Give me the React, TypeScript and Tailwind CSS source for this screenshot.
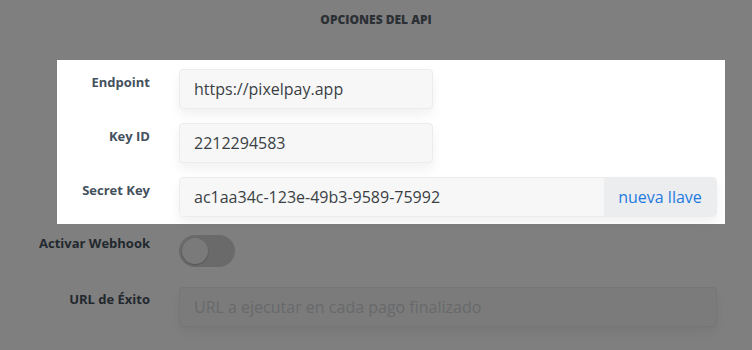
import React from "react";

const inputClass =
  "h-[40px] rounded-[4px] border border-[#ececec] bg-[#f7f7f7] pl-[14px] text-[16px] text-[#3a3f44] shadow-[0_6px_12px_rgba(0,0,0,0.06)] flex items-center";

const Label: React.FC<{ text: string; width: string; pt: string }> = ({ text, width, pt }) => (
  <div className={`${width} ${pt} shrink-0 text-right text-[13px] leading-[16px] font-bold text-[#44515d]`}>
    {text}
  </div>
);

export default function App() {
  return (
    <div className="w-[752px] h-[350px] overflow-hidden bg-white font-['Open_Sans',sans-serif]">
      <h2 className="h-[60px] pt-[11px] text-center text-[12px] font-extrabold uppercase text-[#56606b]">
        Opciones del API
      </h2>

      {/* highlighted block */}
      <div className="relative z-10 ml-[57px] mr-[27px] flex flex-col gap-[14px] bg-white pt-[9px] pb-[7px] pr-[8px] shadow-[0_0_0_9999px_rgba(0,0,0,0.5)]">
        <div className="flex gap-[29px]">
          <Label text="Endpoint" width="w-[93px]" pt="pt-[5px]" />
          <div className={`${inputClass} w-[254px]`}>https://pixelpay.app</div>
        </div>
        <div className="flex gap-[29px]">
          <Label text="Key ID" width="w-[93px]" pt="pt-[5px]" />
          <div className={`${inputClass} w-[254px]`}>2212294583</div>
        </div>
        <div className="flex gap-[29px]">
          <Label text="Secret Key" width="w-[93px]" pt="pt-[5px]" />
          <div className="flex h-[40px] flex-1 overflow-hidden rounded-[4px] border border-[#ececec] shadow-[0_6px_12px_rgba(0,0,0,0.06)]">
            <div className="flex flex-1 items-center bg-[#f7f7f7] pl-[14px] text-[16px] text-[#3a3f44]">
              ac1aa34c-123e-49b3-9589-75992
            </div>
            <div className="flex w-[112px] items-center justify-center bg-[#ebedef] text-[16px] text-[#1f7ae0]">
              nueva llave
            </div>
          </div>
        </div>
      </div>

      <div className="mt-[11px] flex flex-col gap-[20px] pr-[35px]">
        <div className="flex gap-[29px]">
          <Label text="Activar Webhook" width="w-[150px]" pt="pt-0" />
          <div className="flex h-[32px] w-[56px] items-center rounded-full bg-[#d4d4d4] px-[3px]">
            <div className="h-[26px] w-[26px] rounded-full bg-[#f4f4f4] shadow-[0_1px_2px_rgba(0,0,0,0.2)]" />
          </div>
        </div>
        <div className="flex gap-[29px]">
          <Label text="URL de Éxito" width="w-[150px]" pt="pt-[4px]" />
          <div className={`${inputClass} flex-1 text-[#cfd2d5]`}>URL a ejecutar en cada pago finalizado</div>
        </div>
      </div>
    </div>
  );
}
